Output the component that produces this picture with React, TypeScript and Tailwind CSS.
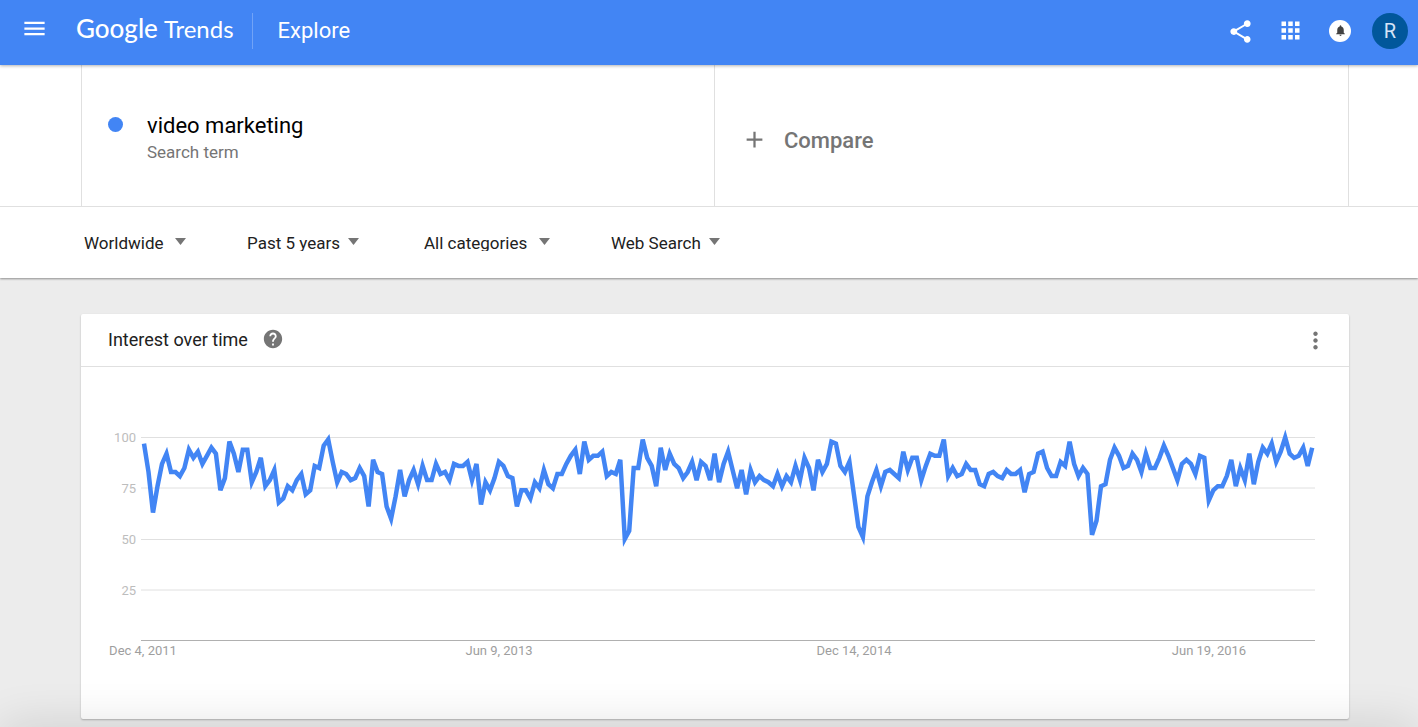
import {
    MdAdd,
    MdApps,
    MdHelp,
    MdMenu,
    MdMoreVert,
    MdNotifications,
    MdShare,
} from "react-icons/md";

// Weekly interest, 0 - 100
const interest = [
    97, 83, 63, 76, 87, 92, 83, 83, 81, 85, 94, 90, 93, 87, 91, 95, 92, 74, 80, 98,
    92, 83, 94, 94, 78, 83, 90, 76, 79, 84, 68, 70, 76, 74, 79, 82, 72, 74, 86, 85,
    96, 99, 88, 78, 83, 82, 79, 80, 85, 81, 66, 89, 83, 82, 66, 60, 71, 84, 71, 79,
    84, 77, 86, 79, 79, 87, 82, 83, 79, 87, 86, 86, 88, 79, 87, 67, 78, 74, 80, 88,
    86, 81, 80, 66, 74, 74, 70, 78, 75, 84, 77, 75, 82, 82, 87, 91, 94, 82, 98, 89,
    91, 91, 93, 81, 83, 82, 89, 50, 54, 85, 85, 99, 90, 86, 76, 95, 84, 92, 87, 85,
    80, 83, 88, 79, 88, 86, 79, 92, 78, 87, 93, 84, 75, 84, 72, 84, 78, 81, 79, 78,
    76, 82, 76, 81, 78, 86, 79, 90, 85, 74, 89, 83, 87, 98, 97, 86, 83, 88, 72, 56,
    51, 71, 78, 84, 76, 83, 84, 82, 80, 93, 84, 90, 90, 79, 86, 92, 91, 91, 99, 81,
    85, 81, 82, 87, 84, 84, 77, 76, 82, 83, 81, 80, 84, 82, 82, 84, 73, 82, 83, 92,
    93, 85, 81, 81, 88, 86, 98, 87, 81, 85, 82, 52, 59, 76, 77, 89, 95, 91, 85, 86,
    92, 89, 83, 92, 85, 85, 90, 96, 91, 85, 79, 87, 89, 87, 82, 91, 90, 69, 74, 76,
    76, 81, 89, 76, 85, 79, 92, 77, 88, 95, 92, 97, 88, 93, 100, 92, 90, 91, 95, 86,
    95,
];

const filters = [
    { label: "Location", value: "Worldwide", item: "w-[163px]", select: "w-[91px]" },
    { label: "Time range", value: "Past 5 years", item: "w-[177px]", select: "w-[101px]" },
    { label: "Category", value: "All categories", item: "w-[187px]", select: "w-[115px]" },
    { label: "Search type", value: "Web Search", item: "w-[109px]", select: "w-[98px]" },
];

const gridLines = [
    { value: "100", y: 70.5 },
    { value: "75", y: 121 },
    { value: "50", y: 172.5 },
    { value: "25", y: 223 },
];

const dates = [
    { text: "Dec 4, 2011", x: 62 },
    { text: "Jun 9, 2013", x: 418 },
    { text: "Dec 14, 2014", x: 773 },
    { text: "Jun 19, 2016", x: 1128 },
];

const START_X = 63;
const STEP_X = 4.493;
const BASE_Y = 273.5;
const UNIT_Y = 2.03;

function InterestChart() {
    const points = interest
        .map((v, i) => `${(START_X + i * STEP_X).toFixed(1)},${(BASE_Y - v * UNIT_Y).toFixed(1)}`)
        .join(" ");

    return (
        <svg viewBox="0 0 1268 352" className="block w-full" role="img" aria-label="Interest over time">
            {gridLines.map((line) => (
                <g key={line.value}>
                    <line x1="60" x2="1234" y1={line.y} y2={line.y} stroke="#e0e0e0" />
                    <text x="55" y={line.y + 4.5} textAnchor="end" fontSize="13" fill="#bdbdbd">
                        {line.value}
                    </text>
                </g>
            ))}
            <line x1="60" x2="1234" y1={BASE_Y} y2={BASE_Y} stroke="#b0b0b0" />
            {dates.map((date) => (
                <text key={date.text} x={date.x} y="288" textAnchor="middle" fontSize="13" fill="#9e9e9e">
                    {date.text}
                </text>
            ))}
            <polyline points={points} fill="none" stroke="#4285f4" strokeWidth="4.5" strokeMiterlimit="4" />
        </svg>
    );
}

function Header() {
    return (
        <header className="relative z-10 flex h-[65px] items-center bg-[#4285f4] pr-[10px] pl-[21px] text-white shadow-[0_1px_3px_rgba(0,0,0,0.3)]">
            <button type="button" aria-label="Menu" className="mb-2">
                <MdMenu size={27} />
            </button>
            <a href="#" className="mb-2 ml-7 flex items-baseline gap-[6px] font-['Lato',sans-serif]">
                <span className="text-[26px] leading-8 font-medium">Google</span>
                <span className="text-[24px] leading-8">Trends</span>
            </a>
            <div className="mb-1 ml-[18px] h-9 w-px bg-white/25" />
            <h1 className="mb-1 ml-[25px] text-[22px] leading-7">Explore</h1>
            <div className="mb-1 ml-auto flex items-center">
                <button type="button" aria-label="Share" className="mt-[2px] mr-[23px]">
                    <MdShare size={27} />
                </button>
                <button type="button" aria-label="Apps" className="mr-[25px]">
                    <MdApps size={27} />
                </button>
                <button
                    type="button"
                    aria-label="Notifications"
                    className="mr-[21px] flex size-[22px] items-center justify-center rounded-full bg-white text-[#424242]"
                >
                    <MdNotifications size={13} />
                </button>
                <button
                    type="button"
                    className="flex size-9 items-center justify-center rounded-full bg-[#01579b] text-xl text-[#d6e4f7]"
                >
                    R
                </button>
            </div>
        </header>
    );
}

export default function App() {
    return (
        <div className="relative min-h-screen bg-[#ececec] pb-2 font-[Roboto,sans-serif] text-[#212121]">
            <Header />

            <section className="relative bg-white shadow-[0_1px_2px_rgba(0,0,0,0.4)]">
                {/* Search terms */}
                <div className="border-b border-[#e0e0e0] pr-[69px] pl-[81px]">
                    <div className="grid h-[141px] grid-cols-2 border-x border-[#e0e0e0]">
                        <div className="flex items-center border-r border-[#e0e0e0] pt-[2px] pl-[26px]">
                            <span className="mb-6 size-[15px] rounded-full bg-[#4285f4]" />
                            <div className="ml-6">
                                <p className="pt-[2px] text-[22px] leading-7 text-black">video marketing</p>
                                <p className="text-[17px] leading-6 text-[#757575]">Search term</p>
                            </div>
                        </div>
                        <button type="button" className="flex items-center gap-4 pt-2 pl-[26px] text-[#757575]">
                            <MdAdd size={27} />
                            <span className="pt-[2px] text-[22px] leading-7 font-medium">Compare</span>
                        </button>
                    </div>
                </div>

                {/* Filters */}
                <div className="flex h-[71px] items-center pl-[84px]">
                    {filters.map((filter) => (
                        <div key={filter.label} className={`flex items-center ${filter.item}`}>
                            <div className="h-4 overflow-hidden">
                                <select
                                    aria-label={filter.label}
                                    className={`block h-4 appearance-none text-[17px] leading-4 ${filter.select}`}
                                >
                                    <option>{filter.value}</option>
                                </select>
                            </div>
                            <svg viewBox="0 0 11 7" className="mb-[2px] h-[7px] w-[11px] shrink-0" aria-hidden="true">
                                <path d="M0 0h11L5.5 7z" fill="#757575" />
                            </svg>
                        </div>
                    ))}
                </div>
            </section>

            <main className="pt-9 pr-[69px] pl-[81px]">
                <section className="rounded-xs bg-white shadow-[0_1px_2px_rgba(0,0,0,0.25)]">
                    <div className="flex h-[53px] items-center border-b border-[#e0e0e0] pr-5 pl-[27px]">
                        <h2 className="text-lg leading-6">Interest over time</h2>
                        <button type="button" aria-label="Help" className="mb-[2px] ml-[14px] text-[#757575]">
                            <MdHelp size={22} />
                        </button>
                        <button type="button" aria-label="More options" className="ml-auto text-[#757575]">
                            <MdMoreVert size={27} />
                        </button>
                    </div>
                    <InterestChart />
                </section>
            </main>

            {/* Soft shade rising from the bottom edge */}
            <div className="pointer-events-none fixed inset-x-0 top-full h-10 rounded-xl shadow-[0_0_48px_rgba(0,0,0,0.14)]" />
        </div>
    );
}
